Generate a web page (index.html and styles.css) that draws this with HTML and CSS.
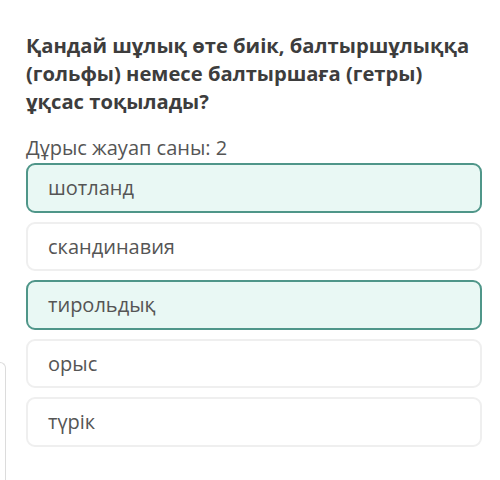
FILE: index.html
```html
<!DOCTYPE html>
<html lang="kk">
<head>
<meta charset="utf-8">
<link rel="stylesheet" href="styles.css">
</head>
<body>
<div class="side-panel"></div>
<main class="quiz">
  <h1 class="question">Қандай шұлық өте биік, балтыршұлыққа (гольфы) немесе балтыршаға (гетры) ұқсас тоқылады?</h1>
  <p class="count">Дұрыс жауап саны: 2</p>
  <ul class="options">
    <li class="option selected">шотланд</li>
    <li class="option">скандинавия</li>
    <li class="option selected">тирольдық</li>
    <li class="option">орыс</li>
    <li class="option">түрік</li>
  </ul>
</main>
</body>
</html>
```
FILE: styles.css
```css
html, body {
  margin: 0;
  padding: 0;
  background: #ffffff;
  overflow: hidden;
}
body {
  width: 500px;
  height: 480px;
  position: relative;
  font-family: "Open Sans", "Noto Sans", sans-serif;
}
.side-panel {
  position: absolute;
  left: -40px;
  top: 362px;
  bottom: 0;
  width: 44px;
  border: 1px solid #dcdcdc;
  border-bottom: none;
  border-radius: 0 6px 0 0;
}
.quiz {
  padding: 31px 18px 0 26px;
}
.question {
  margin: 0;
  max-width: 448px;
  font-size: 20.2px;
  line-height: 28px;
  font-weight: 700;
  color: #3d3d3d;
}
.count {
  margin: 19px 0 1px;
  font-size: 20px;
  line-height: 28px;
  color: #555555;
}
.options {
  list-style: none;
  margin: 0;
  padding: 0;
  display: flex;
  flex-direction: column;
  gap: 9px;
}
.option {
  box-sizing: border-box;
  height: 49.5px;
  display: flex;
  align-items: center;
  padding-left: 20px;
  border: 2px solid #efefef;
  border-radius: 9px;
  background: #ffffff;
  font-size: 20px;
  color: #555555;
}
.option.selected {
  background: #e9f8f4;
  border-color: #4f9689;
}
```
